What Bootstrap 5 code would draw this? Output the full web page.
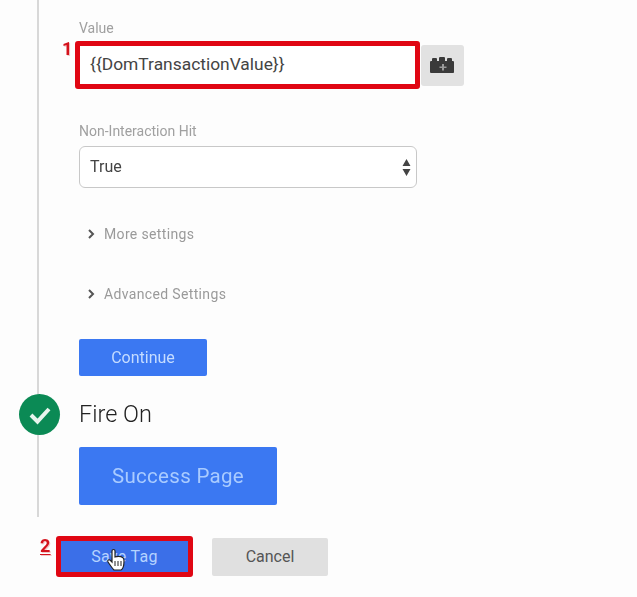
<!DOCTYPE html>
<html lang="en">
<head>
<meta charset="utf-8">
<title>Tag</title>
<link href="https://cdn.jsdelivr.net/npm/bootstrap@5.3.0/dist/css/bootstrap.min.css" rel="stylesheet">
<style>
html,body{height:597px;overflow:hidden}
body{background:#fdfdfd;font-family:Roboto,"Liberation Sans",sans-serif;color:#444}
.page-shell{filter:blur(.35px);width:637px;height:597px}
.rail{margin-left:37px;width:400px;height:517px;border-left:2px solid #d8d8d8;padding-left:40px;position:relative}
.fld-label{font-size:14px;line-height:16px;color:#a0a0a0;margin:0}
.lbl-value{padding-top:20px;height:41px}
.val-row{width:389px;height:48px;margin-left:-4px}
.val-box{position:relative;width:345px;height:48px;border:5px solid #e00613;border-radius:3px;background:#fff;padding-left:10px;font-size:17.4px;color:#444;line-height:37px}
.num-mark{position:absolute;font-weight:700;color:#d4121c;font-size:18px;line-height:18px;text-shadow:1px 1px 0 #f3c8c8}
.mark-one{left:-18px;top:-6px}
.mark-two{left:-21px;top:-4px;text-decoration:underline;text-underline-offset:2px}
.var-btn{width:43px;height:41px;background:#e2e2e2;border-radius:3px;margin-left:1px}
.lbl-hit{margin-top:34px;height:23px;line-height:16px}
.sel-box{width:338px;height:42px;border:1px solid #c8c8c8;border-radius:6px;background:#fff;padding:0 5px 0 10px;font-size:16px;color:#444}
.sect-row{font-size:14px;color:#9a9a9a;line-height:16px;letter-spacing:.35px;padding-left:9px;gap:9px}
.sect-more{margin-top:38px}
.sect-adv{margin-top:44px}
.blue-btn{background:#3b78f2;color:#c5dcff;border:0;border-radius:2px;padding:0}
.btn-continue{display:block;width:128px;height:37px;font-size:16px;margin-top:37px}
.fire-head{font-size:23.5px;font-weight:300;line-height:28px;color:#222;margin:24px 0 19px}
.btn-success-page{display:block;width:198px;height:58px;font-size:20.5px;letter-spacing:.3px;color:#a9cbff}
.check-dot{position:absolute;left:-20px;top:394px;width:41px;height:41px;border-radius:50%;background:#0b8a55}
.foot-bar{margin-left:56px;margin-top:19px;gap:19px}
.save-wrap{position:relative;width:137px;height:41px;border:5px solid #e00613;border-radius:3px;background:#3b6fe8;color:#b5d3ff;font-size:16px;letter-spacing:.3px}
.hand-ptr{position:absolute;left:45px;top:7px;width:20px;height:24px}
.cancel-btn{width:116px;height:38px;background:#e0e0e0;color:#555;border:0;border-radius:2px;font-size:16px;padding:0}
</style>
</head>
<body>
<div class="page-shell">
  <div class="rail">
    <p class="fld-label lbl-value">Value</p>
    <div class="val-row d-flex align-items-center">
      <div class="val-box">
        <span class="num-mark mark-one">1</span>{{DomTransactionValue}}
      </div>
      <button type="button" class="var-btn btn p-0 border-0 d-flex align-items-center justify-content-center" aria-label="Insert variable">
        <svg width="28" height="18" viewBox="0 0 28 18"><path fill="#3a3a3a" d="M1 6c0-1 1-1 1-1h1V3c0-1 1-1 1-1h3c1 0 1 1 1 1v2h2V2c0-1 1-1 1-1h4c1 0 1 1 1 1v3h2V3c0-1 1-1 1-1h3c1 0 1 1 1 1v2h1c1 0 1 1 1 1v10c0 1-1 1-1 1H2c-1 0-1-1-1-1z"/><path fill="#9a9a9a" d="M13 8h2v2.500h2.500V12H15v2.500h-2V12h-2.500v-1.500H13z"/></svg>
      </button>
    </div>
    <p class="fld-label lbl-hit">Non-Interaction Hit</p>
    <div class="sel-box d-flex align-items-center justify-content-between">
      <span>True</span>
      <svg width="9" height="17" viewBox="0 0 9 17"><path fill="#444" d="M4.500 0L8.500 7h-8zM4.500 17L.5 10h8z"/></svg>
    </div>
    <div class="sect-row sect-more d-flex align-items-center">
      <svg width="7" height="10" viewBox="0 0 7 10"><path fill="none" stroke="#555" stroke-width="2" d="M1 1l4 4-4 4"/></svg>
      <span>More settings</span>
    </div>
    <div class="sect-row sect-adv d-flex align-items-center">
      <svg width="7" height="10" viewBox="0 0 7 10"><path fill="none" stroke="#555" stroke-width="2" d="M1 1l4 4-4 4"/></svg>
      <span>Advanced Settings</span>
    </div>
    <button type="button" class="blue-btn btn-continue btn">Continue</button>
    <h2 class="fire-head">Fire On</h2>
    <button type="button" class="blue-btn btn-success-page btn">Success Page</button>
    <div class="check-dot d-flex align-items-center justify-content-center">
      <svg width="24" height="20" viewBox="0 0 24 20"><path fill="none" stroke="#e8f5ee" stroke-width="4" d="M3 10l6.500 6.500L21 4"/></svg>
    </div>
  </div>
  <div class="foot-bar d-flex align-items-center">
    <div class="save-wrap d-flex align-items-center justify-content-center">
      <span class="num-mark mark-two">2</span>
      <span>Save Tag</span>
      <svg class="hand-ptr" viewBox="0 0 20 24"><path fill="#fff" stroke="#222" stroke-width="1.200" d="M6 3c0-2 3-2 3 0v6c2-.6 6-.6 8 .8 1 .8 1 2 1 3.200 0 4-1 8-3 9H8c-2-2-4-5-6-8-1-2 1-3 2.500-1.500L6 14z"/><path stroke="#222" d="M9 13v5M12 13v5M15 13v5"/></svg>
    </div>
    <button type="button" class="cancel-btn btn">Cancel</button>
  </div>
</div>
</body>
</html>
